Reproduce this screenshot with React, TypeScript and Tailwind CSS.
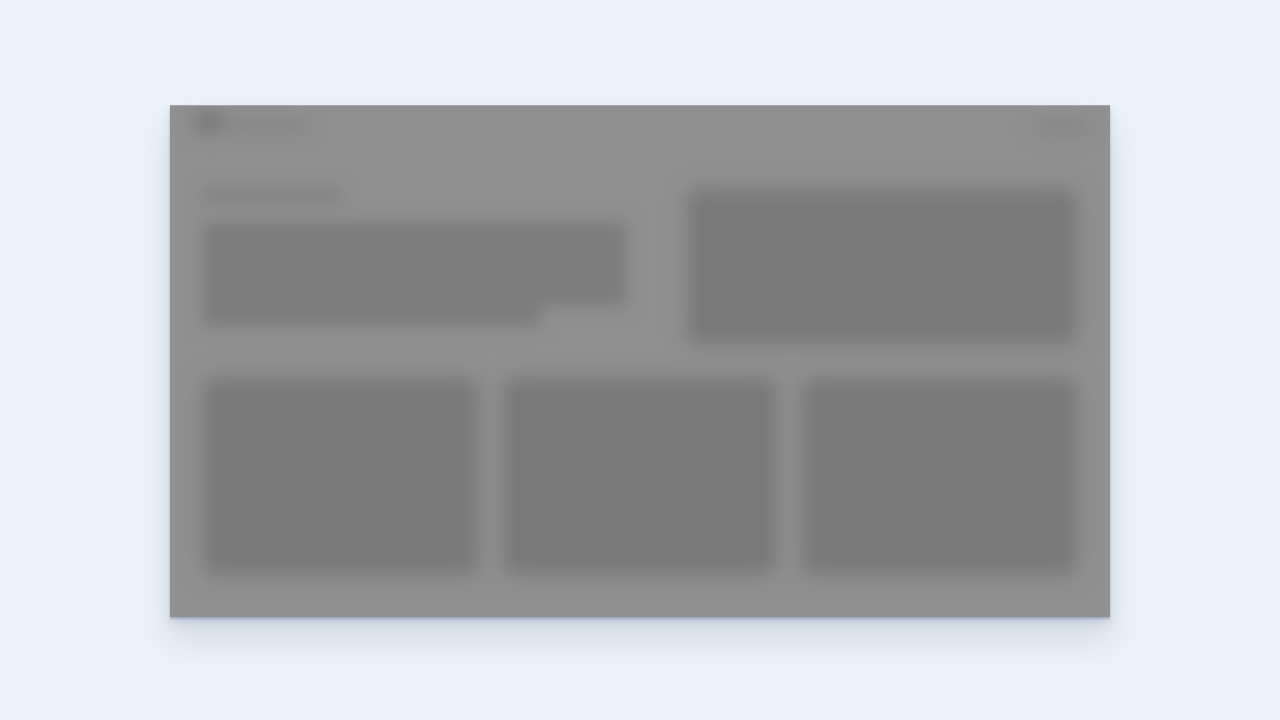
import React from 'react';

const Tile = () => <div className="h-[197px] rounded-xl bg-[#787878] blur-[10px]" />;

export default function App() {
  return (
    <div className="flex h-[720px] w-full items-center justify-center bg-[#edf1f9] pt-[2px]">
      <div className="h-[512px] w-[940px] overflow-hidden border-t border-[#a0a4ac] bg-[#909090] shadow-[0_2px_2px_rgba(90,110,140,0.35),0_6px_8px_rgba(120,140,165,0.22),0_22px_30px_rgba(140,165,175,0.28)]">
        <div className="flex items-center justify-between px-[22px] pt-[3px]">
          <div className="flex items-center gap-[2px] blur-[8px]">
            <div className="h-[24px] w-[34px] rounded-full bg-[#7c7c7c]" />
            <div className="mt-[8px] h-[14px] w-[80px] bg-[#868686]" />
          </div>
          <div className="mt-[10px] h-[16px] w-[54px] bg-[#878787] blur-[8px]" />
        </div>
        <div className="px-[33px] pt-[52px]">
          <div className="flex items-start justify-between">
            <div className="w-[424px]">
              <div className="h-[16px] w-[138px] bg-[#838383] blur-[7px]" />
              <div className="mt-[19px] flex flex-col blur-[8px]">
                <div className="h-[84px] w-full bg-[#7c7c7c]" />
                <div className="h-[20px] w-[338px] bg-[#7c7c7c]" />
              </div>
            </div>
            <div className="mt-[2px] h-[156px] w-[390px] rounded-xl bg-[#787878] blur-[10px]" />
          </div>
          <div className="mt-[33px] grid grid-cols-3 gap-[25px]">
            <Tile />
            <Tile />
            <Tile />
          </div>
        </div>
      </div>
    </div>
  );
}
